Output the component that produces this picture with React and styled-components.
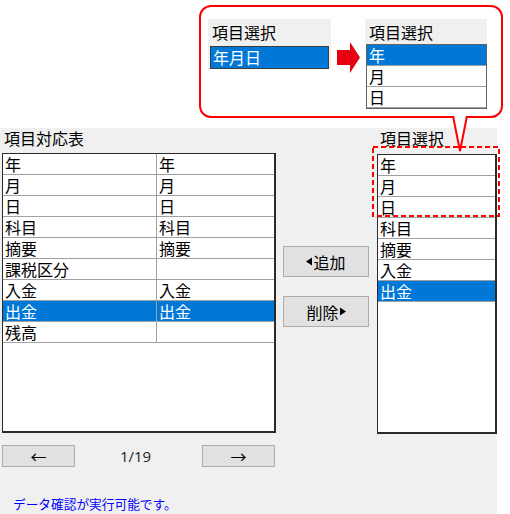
import React from 'react';
import styled, { createGlobalStyle } from 'styled-components';

const GlobalStyle = createGlobalStyle`
  html, body {
    margin: 0;
    padding: 0;
    background: #ffffff;
  }
  body {
    font-family: 'Noto Sans CJK JP', 'Noto Sans', sans-serif;
    color: #000000;
  }
`;

const Screen = styled.div`
  position: relative;
  width: 510px;
  height: 514px;
  overflow: hidden;
`;

// main dialog panel
const Panel = styled.div`
  margin-top: 128px;
  width: 497px;
  height: 386px;
  background: #f0f0f0;
  display: grid;
  grid-template-columns: 276px 101px 120px;
`;

const Column = styled.div`
  display: flex;
  flex-direction: column;
  padding-left: ${(p) => p.$pad || 0}px;
`;

const Label = styled.div`
  height: 25px;
  font-size: 16px;
  line-height: 20px;
  padding-left: ${(p) => p.$indent || 2}px;
`;

const ListFrame = styled.div`
  box-sizing: border-box;
  width: ${(p) => p.$w}px;
  height: 280px;
  margin-top: ${(p) => p.$top || 0}px;
  background: #ffffff;
  border: 1px solid #2b2b2b;
  border-right-width: 2px;
  border-bottom-width: 2px;
`;

const Row = styled.div`
  display: flex;
  height: 20px;
  border-bottom: 1px solid #a0a0a0;
  background: ${(p) => (p.$selected ? '#0078d7' : '#ffffff')};
  color: ${(p) => (p.$selected ? '#ffffff' : '#000000')};
`;

const Cell = styled.div`
  box-sizing: border-box;
  width: ${(p) => (p.$w ? `${p.$w}px` : 'auto')};
  flex: ${(p) => (p.$w ? 'none' : 1)};
  padding-left: 2px;
  font-size: 16px;
  line-height: 20px;
  white-space: nowrap;
  border-right: ${(p) => (p.$divider ? '1px solid #a0a0a0' : 'none')};
`;

const ButtonStack = styled.div`
  display: flex;
  flex-direction: column;
  gap: 19px;
  padding: 118px 0 0 7px;
`;

const Button = styled.div`
  box-sizing: border-box;
  width: ${(p) => p.$w}px;
  height: ${(p) => p.$h}px;
  background: #e1e1e1;
  border: 1px solid #adadad;
  display: flex;
  align-items: center;
  justify-content: center;
  font-size: 16px;
  gap: 1px;
`;

const NavRow = styled.div`
  display: flex;
  align-items: center;
  margin-top: 12px;
  width: 273px;
`;

const Pager = styled.div`
  flex: 1;
  text-align: center;
  font-family: 'Open Sans', 'Liberation Sans', sans-serif;
  font-size: 15px;
  color: #222222;
  padding-right: 6px;
`;

const Status = styled.div`
  margin-top: 29px;
  padding-left: 11px;
  font-size: 12.7px;
  line-height: 16px;
  color: #0000ff;
`;

// annotation bubble over the screenshot
const Callout = styled.div`
  position: absolute;
  left: 199px;
  top: 5px;
  box-sizing: border-box;
  width: 304px;
  height: 113px;
  background: #ffffff;
  border: 2px solid #ff0000;
  border-radius: 12px;
  display: flex;
  align-items: flex-start;
  padding: 12px 0 0 7px;
`;

const MiniPanel = styled.div`
  width: ${(p) => p.$w}px;
  display: flex;
  flex-direction: column;
`;

const MiniLabel = styled.div`
  background: #f0f0f0;
  height: ${(p) => p.$h}px;
  font-size: 16px;
  line-height: 20px;
  padding: 3px 0 0 4px;
  box-sizing: border-box;
`;

const MiniInputBox = styled.div`
  background: #f0f0f0;
  padding: 0 2px 0 2px;
`;

const MiniInput = styled.div`
  box-sizing: border-box;
  height: 23px;
  background: #0078d7;
  border: 1px solid #3c3c3c;
  color: #ffffff;
  font-size: 16px;
  line-height: 20px;
  padding-left: 2px;
`;

const MiniList = styled.div`
  box-sizing: border-box;
  height: 65px;
  margin-left: 1px;
  border: 1px solid #646464;
  background: #ffffff;
`;

const ArrowWrap = styled.div`
  margin: 23px 5px 0 6px;
  width: 23px;
  height: 31px;
`;

const Tail = styled.svg`
  position: absolute;
  left: 451px;
  top: 114px;
  overflow: visible;
`;

const Dashed = styled.svg`
  position: absolute;
  left: 372px;
  top: 146px;
  overflow: visible;
`;

const Tri = ({ dir }) => (
  <svg width="6" height="9" viewBox="0 0 6 9">
    {dir === 'left' ? (
      <polygon points="6,0.5 6,8.5 0,4.5" fill="#000" />
    ) : (
      <polygon points="0,0.5 0,8.5 6,4.5" fill="#000" />
    )}
  </svg>
);

const mapping = [
  ['年', '年'],
  ['月', '月'],
  ['日', '日'],
  ['科目', '科目'],
  ['摘要', '摘要'],
  ['課税区分', ''],
  ['入金', '入金'],
  ['出金', '出金'],
  ['残高', ''],
];

const selected = ['年', '月', '日', '科目', '摘要', '入金', '出金'];

function App() {
  return (
    <>
      <GlobalStyle />
      <Screen>
        <Panel>
          <Column $pad={2}>
            <Label>項目対応表</Label>
            <ListFrame $w={274}>
              {mapping.map(([a, b], i) => (
                <Row key={i} $selected={a === '出金'}>
                  <Cell $w={154} $divider>
                    {a}
                  </Cell>
                  <Cell>{b}</Cell>
                </Row>
              ))}
            </ListFrame>
            <NavRow>
              <Button $w={73} $h={22}>←</Button>
              <Pager>1/19</Pager>
              <Button $w={73} $h={22}>→</Button>
            </NavRow>
            <Status>データ確認が実行可能です。</Status>
          </Column>

          <ButtonStack>
            <Button $w={86} $h={31}>
              <Tri dir="left" />
              追加
            </Button>
            <Button $w={86} $h={31}>
              削除
              <Tri dir="right" />
            </Button>
          </ButtonStack>

          <Column>
            <Label $indent={3}>項目選択</Label>
            <ListFrame $w={120} $top={1}>
              {selected.map((s) => (
                <Row key={s} $selected={s === '出金'}>
                  <Cell>{s}</Cell>
                </Row>
              ))}
            </ListFrame>
          </Column>
        </Panel>

        <Callout>
          <MiniPanel $w={123}>
            <MiniLabel $h={27}>項目選択</MiniLabel>
            <MiniInputBox>
              <MiniInput>年月日</MiniInput>
            </MiniInputBox>
          </MiniPanel>
          <ArrowWrap>
            <svg width="23" height="31" viewBox="0 0 23 31">
              <polygon
                points="0,8 13,8 13,0 23,15.5 13,31 13,23 0,23"
                fill="#e60012"
              />
            </svg>
          </ArrowWrap>
          <MiniPanel $w={122}>
            <MiniLabel $h={25}>項目選択</MiniLabel>
            <MiniList>
              {['年', '月', '日'].map((s) => (
                <Row key={s} $selected={s === '年'}>
                  <Cell>{s}</Cell>
                </Row>
              ))}
            </MiniList>
          </MiniPanel>
        </Callout>

        <Tail width="18" height="40">
          <rect x="2" y="0" width="14" height="3" fill="#ffffff" />
          <polyline
            points="2,2 9,37 16,2"
            fill="#ffffff"
            stroke="#ff0000"
            strokeWidth="2"
            strokeLinejoin="miter"
          />
        </Tail>

        <Dashed width="128" height="71">
          <rect
            x="1"
            y="1"
            width="126"
            height="69"
            fill="none"
            stroke="#ff0000"
            strokeWidth="2"
            strokeDasharray="5 3"
          />
        </Dashed>
      </Screen>
    </>
  );
}

export default App;
